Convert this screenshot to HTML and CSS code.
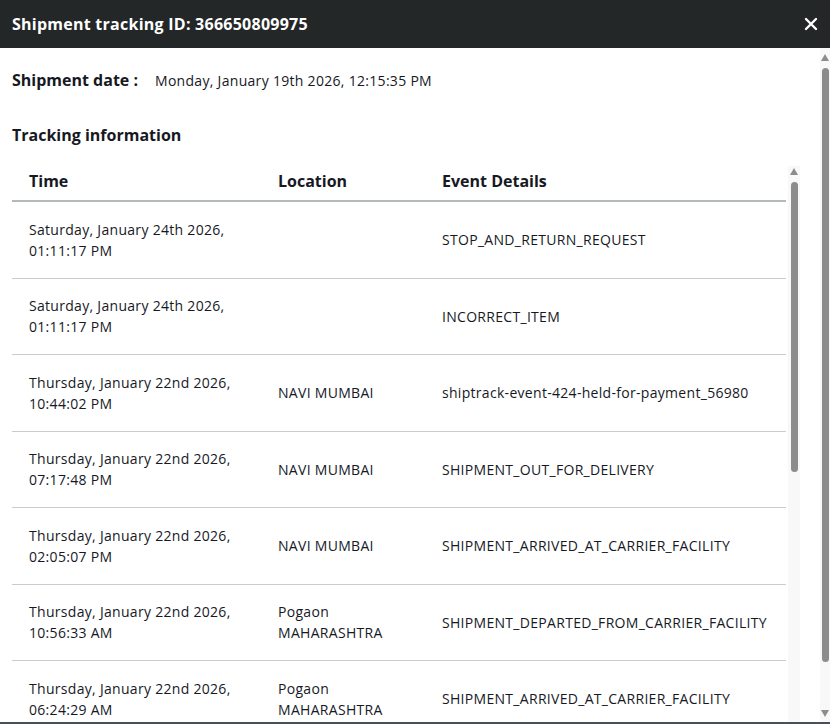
FILE: index.html
```html
<!DOCTYPE html>
<html>
<head>
  <title>Shipment tracking</title>
  <link rel="stylesheet" href="styles.css">
</head>
<body>

<div class="modal">
  <div class="modal-header">
    <h1>Shipment tracking ID: 366650809975</h1>
    <button class="close" aria-label="Close">
      <svg width="14" height="14" viewBox="0 0 14 14"><path d="M2 2 L12 12 M12 2 L2 12" stroke="#fff" stroke-width="2.4" stroke-linecap="round"/></svg>
    </button>
  </div>

  <div class="modal-body">
    <div class="ship-date">
      <span class="label">Shipment date :</span>
      <span class="value">Monday, January 19th 2026, 12:15:35 PM</span>
    </div>

    <h2>Tracking information</h2>

    <div class="table-wrap">
      <table class="events">
        <colgroup>
          <col class="col-time">
          <col class="col-loc">
          <col>
        </colgroup>
        <thead>
          <tr>
            <th>Time</th>
            <th>Location</th>
            <th>Event Details</th>
          </tr>
        </thead>
        <tbody>
          <tr>
            <td>Saturday, January 24th 2026, 01:11:17 PM</td>
            <td></td>
            <td class="event">STOP_AND_RETURN_REQUEST</td>
          </tr>
          <tr>
            <td>Saturday, January 24th 2026, 01:11:17 PM</td>
            <td></td>
            <td class="event">INCORRECT_ITEM</td>
          </tr>
          <tr>
            <td>Thursday, January 22nd 2026, 10:44:02 PM</td>
            <td>NAVI MUMBAI</td>
            <td class="event">shiptrack-event-424-held-for-payment_56980</td>
          </tr>
          <tr>
            <td>Thursday, January 22nd 2026, 07:17:48 PM</td>
            <td>NAVI MUMBAI</td>
            <td class="event">SHIPMENT_OUT_FOR_DELIVERY</td>
          </tr>
          <tr>
            <td>Thursday, January 22nd 2026, 02:05:07 PM</td>
            <td>NAVI MUMBAI</td>
            <td class="event">SHIPMENT_ARRIVED_AT_CARRIER_FACILITY</td>
          </tr>
          <tr>
            <td>Thursday, January 22nd 2026, 10:56:33 AM</td>
            <td>Pogaon MAHARASHTRA</td>
            <td class="event">SHIPMENT_DEPARTED_FROM_CARRIER_FACILITY</td>
          </tr>
          <tr>
            <td>Thursday, January 22nd 2026, 06:24:29 AM</td>
            <td>Pogaon MAHARASHTRA</td>
            <td class="event">SHIPMENT_ARRIVED_AT_CARRIER_FACILITY</td>
          </tr>
        </tbody>
      </table>

      <div class="scrollbar inner-bar">
        <div class="arrow up"></div>
        <div class="thumb"></div>
      </div>
    </div>

    <div class="scrollbar outer-bar">
      <div class="arrow up"></div>
      <div class="thumb"></div>
      <div class="arrow down"></div>
    </div>
  </div>
</div>

</body>
</html>
```

FILE: styles.css
```css
body {
  margin: 0;
  background: #4a4f55;
  font-family: "Open Sans", "Noto Sans", sans-serif;
  color: #16191f;
  letter-spacing: 0.3px;
}

.modal {
  width: 830px;
  height: 722px;
  background: #fff;
  display: flex;
  flex-direction: column;
}

.modal-header {
  height: 48px;
  flex: none;
  background: #232728;
  display: flex;
  align-items: center;
  justify-content: space-between;
  padding: 0 12px;
}

.modal-header h1 {
  margin: 0;
  color: #fff;
  font-size: 16px;
  font-weight: 700;
  letter-spacing: 0.25px;
}

.close {
  border: 0;
  background: none;
  padding: 0;
  width: 14px;
  height: 14px;
  display: flex;
  cursor: pointer;
}

.modal-body {
  flex: 1;
  position: relative;
  overflow: hidden;
  padding: 0 30px 0 12px;
}

.ship-date {
  margin-top: 21px;
  display: flex;
  align-items: baseline;
  line-height: 22px;
}

.ship-date .label {
  font-size: 16px;
  font-weight: 700;
  letter-spacing: 0;
  width: 143px;
}

.ship-date .value {
  font-size: 14px;
}

h2 {
  margin: 32px 0 0;
  font-size: 16px;
  font-weight: 700;
  line-height: 22px;
  letter-spacing: 0;
}

.table-wrap {
  position: relative;
  margin-top: 20px;
  height: 600px;
  overflow: hidden;
  padding-right: 14px;
}

.events {
  width: 774px;
  table-layout: fixed;
  border-collapse: collapse;
  font-size: 14px;
  line-height: 21px;
}

.events .col-time {
  width: 249px;
}

.events .col-loc {
  width: 164px;
}

.events th {
  text-align: left;
  font-size: 16px;
  font-weight: 700;
  letter-spacing: 0;
  height: 30px;
  padding: 0 17px 4px;
  border-bottom: 2px solid #b4babc;
}

.events td {
  padding: 16.75px 17px;
  vertical-align: middle;
  border-bottom: 1px solid #c9cdcf;
}

.events td.event {
  white-space: nowrap;
  padding-right: 4px;
}

/* fake scrollbars, drawn over the content */
.scrollbar {
  position: absolute;
  top: 0;
  right: 0;
  display: flex;
  flex-direction: column;
  align-items: center;
  background: #f8f8f8;
}

.inner-bar {
  width: 12px;
  height: 100%;
  padding-top: 2px;
}

.outer-bar {
  width: 10px;
  bottom: 0;
  padding-top: 6px;
}

.arrow {
  width: 0;
  height: 0;
  border-left: 4.5px solid transparent;
  border-right: 4.5px solid transparent;
}

.arrow.up {
  border-bottom: 7px solid #8c8c8c;
}

.arrow.down {
  border-top: 7px solid #8c8c8c;
  margin-top: 48px;
}

.thumb {
  width: 7px;
  background: #8c8c8c;
  border-radius: 4px;
  margin-top: 7px;
}

.inner-bar .thumb {
  height: 290px;
  margin-left: 1px;
}

.outer-bar .thumb {
  height: 594px;
}
```
